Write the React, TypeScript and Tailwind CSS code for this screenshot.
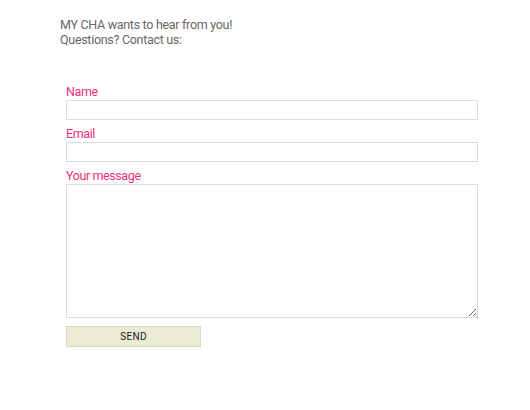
export default function App() {
  const font = { fontFamily: 'Roboto, "Liberation Sans", sans-serif' };
  return (
    <div className="w-[530px] h-[410px] bg-white" style={font}>
      <div className="pt-[17px] pl-[60px] text-[12.5px] leading-[15px] tracking-[-0.3px] text-[#666666]">
        <p>MY CHA wants to hear from you!</p>
        <p>Questions? Contact us:</p>
      </div>
      <form className="pl-[66px] pt-[38px] w-[478px] flex flex-col">
        <label className="block h-[15px] text-[12.5px] leading-[14px] tracking-[-0.4px] text-[#ec2f7b]">Name</label>
        <input className="block w-[412px] h-[20px] border border-[#dcdcdc] bg-white outline-none" />
        <label className="block mt-[7px] h-[15px] text-[12.5px] leading-[14px] tracking-[-0.4px] text-[#ec2f7b]">Email</label>
        <input className="block w-[412px] h-[20px] border border-[#dcdcdc] bg-white outline-none" />
        <label className="block mt-[7px] h-[15px] text-[12.5px] leading-[14px] tracking-[-0.4px] text-[#ec2f7b]">Your message</label>
        <textarea className="block w-[412px] h-[134px] border border-[#dcdcdc] bg-white outline-none resize" />
        <button type="button" className="block mt-[8px] w-[135px] h-[21px] border border-[#d8d8c8] bg-[#ebebd3] text-[10px] leading-[19px] text-[#222222] tracking-[0.3px]">
          SEND
        </button>
      </form>
    </div>
  );
}
